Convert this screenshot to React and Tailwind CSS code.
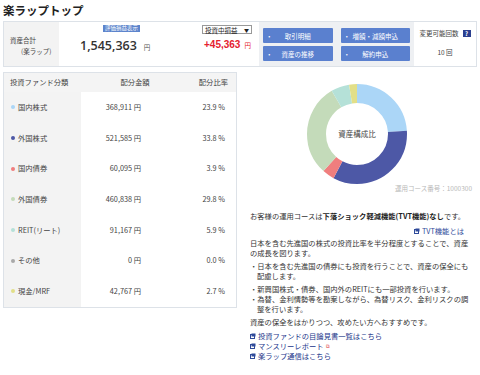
import React from 'react';

const rows = [
  { name: '国内株式', amount: '368,911', pct: '23.9', color: '#abd6f7' },
  { name: '外国株式', amount: '521,585', pct: '33.8', color: '#4d58a6' },
  { name: '国内債券', amount: '60,095', pct: '3.9', color: '#f07e7e' },
  { name: '外国債券', amount: '460,838', pct: '29.8', color: '#c4dbba' },
  { name: 'REIT(リート)', amount: '91,167', pct: '5.9', color: '#b5e1d8' },
  { name: 'その他', amount: '0', pct: '0.0', color: '#a9a9a9' },
  { name: '現金/MRF', amount: '42,767', pct: '2.7', color: '#e2df88' },
];

const buttons = ['取引明細', '増額・減額申込', '資産の推移', '解約申込'];

function Donut() {
  const r = 40.5;
  const c = 2 * Math.PI * r;
  let acc = 0;
  return (
    <svg width="102" height="102" viewBox="0 0 102 102">
      <g transform="rotate(-90 51 51)">
        {rows.map((row) => {
          const len = (parseFloat(row.pct) / 100) * c;
          const el = (
            <circle
              key={row.name}
              cx="51"
              cy="51"
              r={r}
              fill="none"
              stroke={row.color}
              strokeWidth="19"
              strokeDasharray={`${len} ${c - len}`}
              strokeDashoffset={-acc}
            />
          );
          acc += len;
          return el;
        })}
      </g>
      <text x="51" y="54" textAnchor="middle" fontSize="7.5" fill="#444" fontFamily="Noto Sans CJK JP, sans-serif">
        資産構成比
      </text>
    </svg>
  );
}

function LinkIcon() {
  return (
    <svg width="6" height="6" viewBox="0 0 6 6" className="inline-block mr-[2px] align-[0px]">
      <rect x="0.5" y="1.5" width="4" height="4" fill="none" stroke="#2f4a9a" strokeWidth="1" />
      <rect x="1.5" y="0.5" width="4" height="3" fill="#2f4a9a" />
    </svg>
  );
}

export default function App() {
  return (
    <div className="w-[480px] h-[375px] overflow-hidden bg-white text-[#333] font-['Noto_Sans_CJK_JP','Liberation_Sans',sans-serif]">
      <h1 className="h-[21px] pl-[3px] pt-[3px] text-[11.5px] leading-[14px] font-bold text-[#222]">楽ラップトップ</h1>

      <div className="mx-[3px] h-[46px] flex border border-[#dde2e8]">
        <div className="w-[55px] bg-[#f3f3f3] pt-[13px] pl-[6px] text-[6.5px] leading-[11px] text-[#444]">
          <div>資産合計</div>
          <div className="pl-[11px]">(楽ラップ)</div>
        </div>

        <div className="w-[200px] flex">
          <div className="w-[143px] pl-[21px] pt-[3px] flex flex-col items-start">
            <span className="ml-[23px] block bg-[#5c84cc] text-white text-[5.5px] leading-[7px] px-[2px]">評価損益表示</span>
            <div className="mt-[6px] flex items-baseline">
              <span className="text-[12.5px] leading-[15px] font-semibold text-[#333] font-['Open_Sans',sans-serif]">1,545,363</span>
              <span className="ml-[7px] text-[6.5px] text-[#555]">円</span>
            </div>
          </div>
          <div className="pt-[3px] flex flex-col items-start">
            <div className="w-[50px] h-[9px] border border-[#999] bg-white flex items-center justify-between px-[2px] text-[6.5px] leading-[8px] text-[#222]">
              <span>投資中損益</span>
              <span className="text-[5px]">▼</span>
            </div>
            <div className="mt-[5px] pl-[2px] flex items-baseline">
              <span className="text-[10px] leading-[12px] font-bold text-[#e5212f] font-['Liberation_Sans',sans-serif]">+45,363</span>
              <span className="ml-[4px] text-[6.5px] text-[#e5212f]">円</span>
            </div>
          </div>
        </div>

        <div className="w-[155px] bg-[#eef0f3] grid grid-cols-2 gap-x-[8px] gap-y-[3px] pt-[6px] px-[4px] content-start">
          {buttons.map((b) => (
            <div key={b} className="h-[15px] bg-[#5a80cf] rounded-[1px] relative flex items-center justify-center text-white text-[6.5px] leading-[8px]">
              <span className="absolute left-[3px]">・</span>
              <span>{b}</span>
            </div>
          ))}
        </div>

        <div className="flex-1 flex flex-col items-center pt-[7px] text-[6.5px] leading-[9px] text-[#444]">
          <div className="flex items-center">
            <span>変更可能回数</span>
            <span className="ml-[4px] w-[8px] h-[7px] bg-[#2b3f8f] text-white text-[6px] leading-[7px] font-bold flex items-center justify-center">?</span>
          </div>
          <div className="mt-[10px]">10 回</div>
        </div>
      </div>

      <div className="flex mt-[5px]">
        <div className="ml-[3px] w-[234px] h-[236px] border border-[#dde2e8] text-[7.3px] leading-[9px] text-[#444] self-start">
          <div className="h-[19px] bg-[#f4f4f4] flex items-center">
            <div className="w-[77px] pl-[6px]">投資ファンド分類</div>
            <div className="w-[100px] text-center pl-[8px]">配分金額</div>
            <div className="flex-1 text-right pr-[8px]">配分比率</div>
          </div>
          {rows.map((row) => (
            <div key={row.name} className="h-[30.7px] flex items-stretch">
              <div className="w-[77px] bg-[#f3f3f3] flex items-center pl-[7px]">
                <span className="w-[4px] h-[4px] rounded-full mr-[3px]" style={{ backgroundColor: row.color }} />
                <span>{row.name}</span>
              </div>
              <div className="w-[100px] flex items-center justify-end pr-[40px]">{row.amount} 円</div>
              <div className="flex-1 flex items-center justify-end pr-[11px]">{row.pct} %</div>
            </div>
          ))}
        </div>

        <div className="ml-[3px] w-[234px] text-[7.3px] leading-[10px] text-[#333]">
          <div className="flex justify-center pt-[11px]">
            <Donut />
          </div>
          <div className="text-right text-[6.5px] leading-[8px] text-[#b8b8b8] pr-[2px] mt-[-1px]">運用コース番号：1000300</div>

          <div className="pl-[10px] mt-[19px]">
            <p>
              お客様の運用コースは<b className="text-[#222]">下落ショック軽減機能(TVT機能)なし</b>です。
            </p>
            <p className="text-right pr-[10px] mt-[5px] text-[#2f4a9a]">
              <LinkIcon />TVT機能とは
            </p>
            <p className="mt-[2px]">
              日本を含む先進国の株式の投資比率を半分程度とすることで、資産
              <br />
              の成長を図ります。
            </p>
            <ul className="mt-[3px]">
              <li className="pl-[7px] -indent-[7px]">
                ・日本を含む先進国の債券にも投資を行うことで、資産の保全にも
                <br />
                配慮します。
              </li>
              <li className="pl-[7px] -indent-[7px] mt-[3px]">・新興国株式・債券、国内外のREITにも一部投資を行います。</li>
              <li className="pl-[7px] -indent-[7px]">
                ・為替、金利情勢等を勘案しながら、為替リスク、金利リスクの調
                <br />
                整を行います。
              </li>
            </ul>
            <p className="mt-[3px]">資産の保全をはかりつつ、攻めたい方へおすすめです。</p>
            <div className="mt-[4px] text-[#22358a]">
              <div><LinkIcon />投資ファンドの目論見書一覧はこちら</div>
              <div>
                <LinkIcon />マンスリーレポート
                <span className="ml-[2px] inline-block text-[5px] text-[#d33] align-top">⧉</span>
              </div>
              <div><LinkIcon />楽ラップ通信はこちら</div>
            </div>
          </div>
        </div>
      </div>
    </div>
  );
}
